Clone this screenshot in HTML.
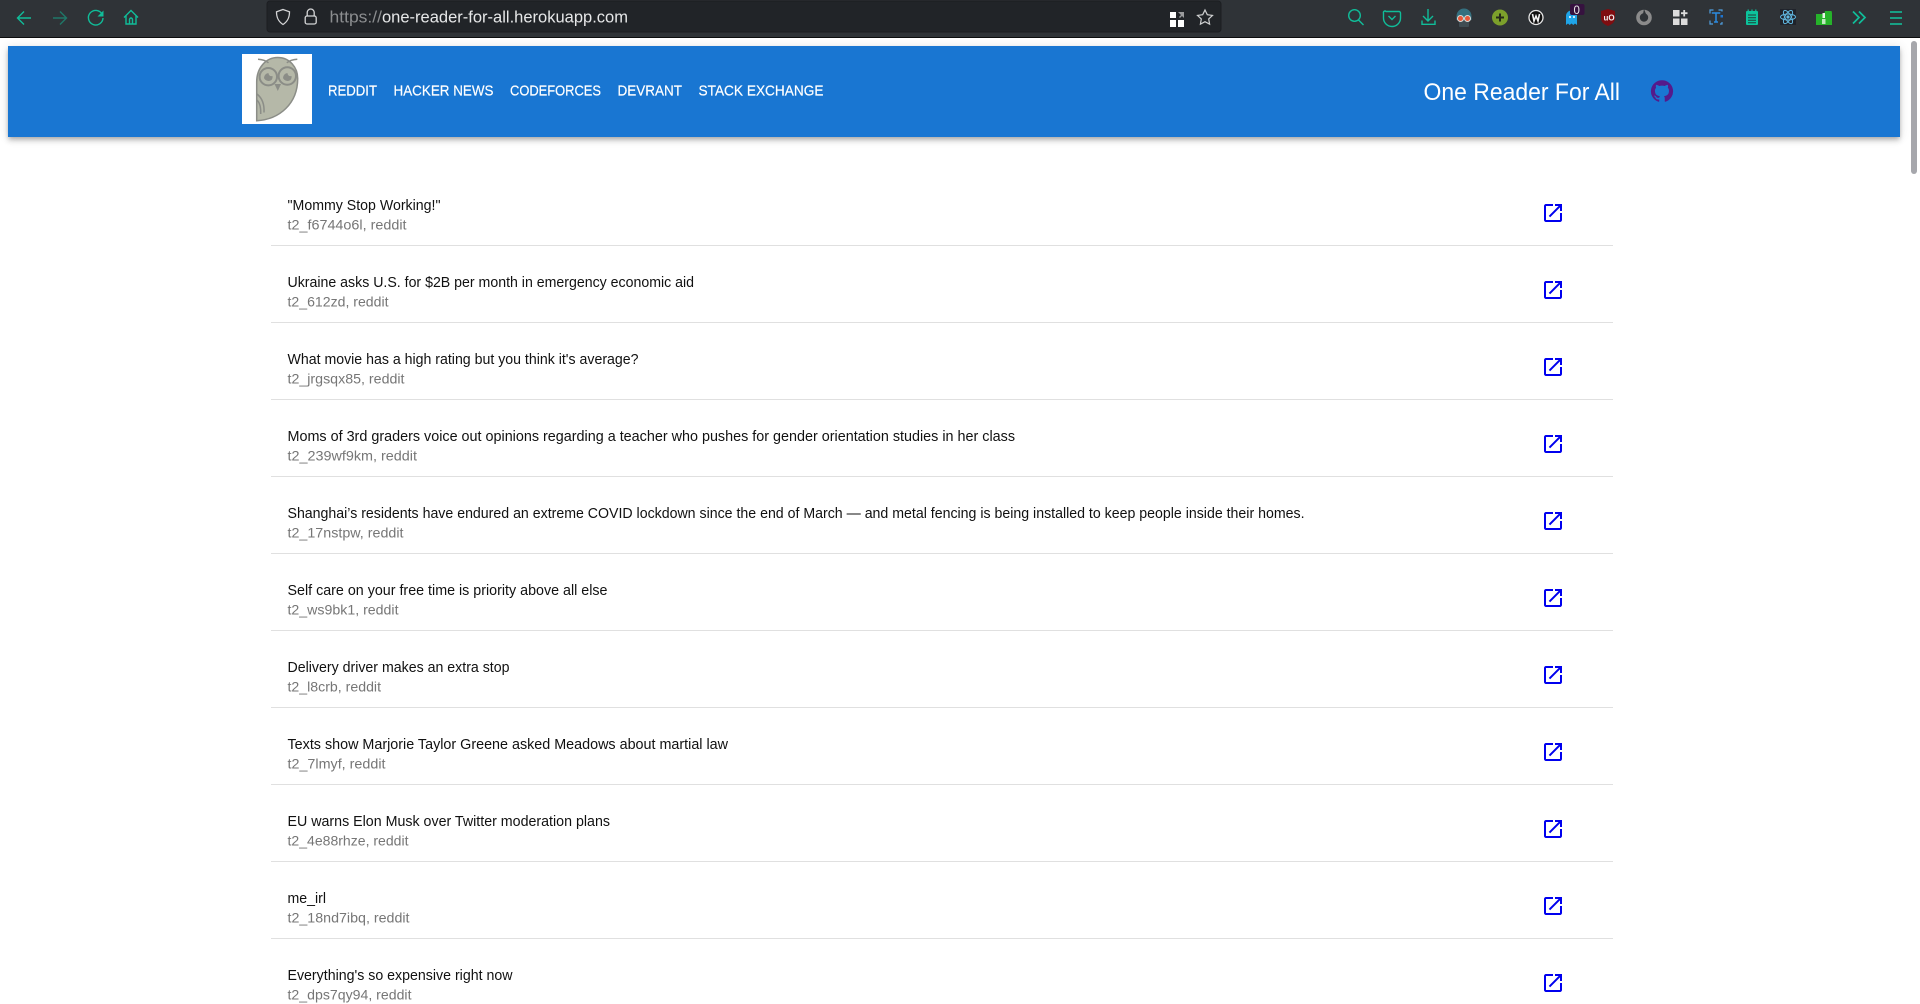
<!DOCTYPE html>
<html lang="en">
<head>
<meta charset="utf-8">
<title>One Reader For All</title>
<style>
html,body{margin:0;padding:0;width:1920px;height:1004px;overflow:hidden;background:#fff}
#bar{position:absolute;left:8px;top:46px;width:1892px;height:91px;background:#1976d2;box-shadow:0 2px 4px -1px rgba(0,0,0,.2),0 4px 5px 0 rgba(0,0,0,.14),0 1px 10px 0 rgba(0,0,0,.12)}
svg{position:absolute;left:0;top:0}
text{font-family:"Liberation Sans",sans-serif}
.t{font-size:15.2px;fill:#111}
.s{font-size:13.8px;fill:#767676}
.n{font-size:15px;fill:#fff;stroke:#fff;stroke-width:.2px}
.tl{fill:none;stroke:#10bd99;stroke-width:1.4}
</style>
</head>
<body>
<div id="bar"></div>
<svg width="1920" height="1004" viewBox="0 0 1920 1004" xmlns="http://www.w3.org/2000/svg">
<!-- toolbar -->
<rect x="0" y="0" width="1920" height="37" fill="#2f3337"/>
<rect x="0" y="37" width="1920" height="1" fill="#0c0d0e"/>
<rect x="267" y="1" width="954" height="31" rx="3" fill="#212428" stroke="#1c1e21"/>

<!-- nav icons -->
<path class="tl" d="M31 18H18M24 11.5 17.5 18l6.5 6.5"/>
<path class="tl" d="M53 18H66M60 11.5 66.5 18 60 24.5" style="opacity:.5"/>
<path class="tl" d="M102 14a7.3 7.3 0 1 0 1 4"/>
<path d="M103.5 10.500v6h-6z" fill="#10bd99"/>
<path class="tl" d="M124 17.5 131 10.5l7 7M126 15.5v8.500h10v-8.500M129.5 24v-4.500a1.500 1.500 0 0 1 3 0V24"/>
<!-- shield / lock -->
<path d="M283 9.5l6.500 2.300c0 5.500-1.500 9.500-6.500 12.700-5-3.200-6.500-7.200-6.500-12.700z" fill="none" stroke="#d4d5d6" stroke-width="1.300"/>
<path d="M307.2 16v-3.500a3.500 3.500 0 0 1 7 0V16" fill="none" stroke="#d4d5d6" stroke-width="1.300"/>
<rect x="305.2" y="16" width="11" height="8" rx="1.800" fill="none" stroke="#d4d5d6" stroke-width="1.300"/>
<!-- url -->
<text x="329.5" y="22.500" font-size="16.500" fill="#8b8d8f" textLength="52.500" lengthAdjust="spacingAndGlyphs">https://</text>
<text x="382" y="22.500" font-size="16.500" fill="#e6e7e8" textLength="246" lengthAdjust="spacingAndGlyphs">one-reader-for-all.herokuapp.com</text>
<!-- qr + star -->
<g fill="#fff"><rect x="1170" y="12" width="6" height="6"/><rect x="1170" y="20" width="6" height="7"/><rect x="1178" y="20" width="6" height="7"/></g>
<path d="M1178 12h6v6l-2-2-2 2-1-1 2-2z" fill="#9a9b9d"/>
<path d="M1205 10l2.300 4.700 5.200.7-3.800 3.600.9 5.100-4.600-2.400-4.600 2.400.9-5.100-3.800-3.600 5.200-.7z" fill="none" stroke="#cfd0d1" stroke-width="1.200"/>

<!-- right icons -->
<circle cx="1354.5" cy="15.500" r="5.800" class="tl"/><path class="tl" d="M1358.500 20l5 5"/>
<path class="tl" d="M1386 11h13a1.500 1.500 0 0 1 1.500 1.500v5a8.500 8.500 0 0 1-17 0v-5A1.500 1.500 0 0 1 1386 11zM1388.500 15.500l3.500 3.500 3.500-3.500" transform="translate(0,.5)"/>
<path class="tl" d="M1428 9v12M1423 16l5 5 5-5M1422 20.500v3.800h13v-3.800"/>
<!-- goggles -->
<path d="M1456.500 16a7.500 7.500 0 0 1 15 0v4h-15z" fill="#35707f"/>
<rect x="1459" y="20" width="10" height="7" rx="1" fill="#3f4d53"/>
<circle cx="1460.500" cy="18.500" r="3" fill="#e8593a" stroke="#d8dcd8"/><circle cx="1467.500" cy="18.500" r="3" fill="#e8593a" stroke="#d8dcd8"/>
<!-- plus -->
<circle cx="1500" cy="17.500" r="8" fill="#7ca02b"/><path d="M1496 17.500h8M1500 13.500v8" stroke="#252a1a" stroke-width="2"/>
<!-- W -->
<circle cx="1536" cy="17.500" r="7" fill="#111" stroke="#e6e6e6" stroke-width="1.300"/>
<path d="M1532.500 14l1.500 7 2-5 2 5 1.500-7" fill="none" stroke="#f2f2f2" stroke-width="1.600"/>
<!-- ghost -->
<path d="M1566 25v-9a5.500 5.500 0 0 1 11 0v9l-2-1.500-1.700 1.500-1.800-1.500-1.800 1.500-1.700-1.500z" fill="#1fa5e8"/>
<circle cx="1570" cy="17" r="1" fill="#fff"/><circle cx="1574" cy="17" r="1" fill="#fff"/>
<rect x="1570" y="4" width="14.500" height="11" rx="2" fill="#36123f"/>
<text x="1573.5" y="14" font-size="11.500" fill="#e8e8e8">0</text>
<!-- ublock -->
<path d="M1601 11l7-2 7 2v7c0 4-3 6.500-7 8-4-1.500-7-4-7-8z" fill="#7f0d10"/>
<text x="1603.5" y="20.500" font-size="8" font-weight="bold" fill="#eee">uO</text>
<!-- ring -->
<circle cx="1644" cy="17.500" r="6" fill="none" stroke="#8b8b8b" stroke-width="3.600"/>
<path d="M1644 9l2 5h-3z" fill="#2f3337"/>
<!-- grid -->
<g fill="#dcdcdc"><rect x="1673" y="10" width="6.500" height="6.500"/><rect x="1673" y="18.500" width="6.500" height="6.500"/><rect x="1681" y="18.500" width="6.500" height="6.500"/></g>
<path d="M1684.200 10v6.500M1681 13.200h6.500" stroke="#dcdcdc" stroke-width="1.800"/>
<!-- T capture -->
<path d="M1710 13.500V10h3.500M1718.500 10h3.500v1.500M1710 20.500V24h3M1722 22v2h-2" fill="none" stroke="#4f9fe0" stroke-width="1.200"/>
<path d="M1711.800 13h8.500M1716 13v9M1714 22h4" stroke="#2a8be0" stroke-width="1.500" fill="none"/>
<rect x="1720.5" y="15" width="2.500" height="2.500" fill="#1d74d0"/>
<!-- notepad -->
<rect x="1746" y="11" width="12" height="14" rx="1" fill="#0cc39c"/>
<path d="M1748.200 9.500v2.500M1752 9.500v2.500M1755.800 9.500v2.500" stroke="#0cc39c" stroke-width="1.200"/>
<path d="M1748 15h8M1748 17.700h8M1748 20.300h8M1748 22.800h8" stroke="#1f3f39" stroke-width="1"/>
<!-- react -->
<rect x="1780" y="9" width="16" height="16" fill="#20232a"/>
<g fill="none" stroke="#61b8e0" stroke-width="1"><ellipse cx="1788" cy="17" rx="7.500" ry="3"/><ellipse cx="1788" cy="17" rx="7.500" ry="3" transform="rotate(60 1788 17)"/><ellipse cx="1788" cy="17" rx="7.500" ry="3" transform="rotate(120 1788 17)"/></g>
<circle cx="1788" cy="17" r="1.600" fill="#61b8e0"/>
<!-- green folder -->
<path d="M1816 14h8l1-3h6.500l.5 2v12h-16z" fill="#26b32a"/>
<rect x="1822.5" y="13" width="2.500" height="5" fill="#e8f6e8"/>
<rect x="1822" y="19" width="3.500" height="5" fill="#bfe8bf"/>
<!-- chevrons + menu -->
<path class="tl" d="M1853 11.500l6 6-6 6M1859 11.500l6 6-6 6" style="stroke-width:1.700"/>
<path d="M1890 12h12M1890 18h12M1890 24h12" stroke="#10c49d" stroke-width="1.600"/>

<!-- logo -->
<rect x="242" y="54" width="70" height="70" fill="#fff"/>
<path d="M256.7 120.700V82c0-14 9-24.500 21-24.500s20 10 20 21c0 25-18 41-41 42.200z" fill="#b5b8a8" stroke="#8b8d87" stroke-width="1.500"/>
<path d="M258 59.300c5 .3 8 1.500 10.500 3.500M297.300 59.300c-5 .3-8 1.500-10.500 3.500" fill="none" stroke="#8b8d87" stroke-width="1.500"/>
<circle cx="268.3" cy="76.700" r="8.700" fill="#b5b8a8" stroke="#8b8d87" stroke-width="2"/>
<circle cx="287.3" cy="76" r="8.700" fill="#b5b8a8" stroke="#8b8d87" stroke-width="2"/>
<path d="M264 78a5 5 0 0 0 7.500 2 5 5 0 0 0 1-4 3 3 0 0 1-4-3 5 5 0 0 0-4.500 5z" fill="#8b8d87"/>
<path d="M283 78a5 5 0 0 0 7.500 2 5 5 0 0 0 1-4 3 3 0 0 1-4-3 5 5 0 0 0-4.500 5z" fill="#8b8d87"/>
<path d="M274.5 84h6.500l-3.200 7z" fill="#8b8d87"/>
<path d="M257 94c5 4 7.500 10 7 18.500M257 100c3 3 4 7 3.700 14" fill="none" stroke="#8b8d87" stroke-width="1.500"/>

<!-- nav -->
<text class="n" x="328" y="95.500" textLength="49" lengthAdjust="spacingAndGlyphs">REDDIT</text>
<text class="n" x="393.5" y="95.500" textLength="100" lengthAdjust="spacingAndGlyphs">HACKER NEWS</text>
<text class="n" x="510" y="95.500" textLength="91" lengthAdjust="spacingAndGlyphs">CODEFORCES</text>
<text class="n" x="617.5" y="95.500" textLength="64.500" lengthAdjust="spacingAndGlyphs">DEVRANT</text>
<text class="n" x="698.5" y="95.500" textLength="125" lengthAdjust="spacingAndGlyphs">STACK EXCHANGE</text>
<text x="1423.5" y="100" font-size="24" fill="#fff" textLength="196.500" lengthAdjust="spacingAndGlyphs">One Reader For All</text>
<g transform="translate(1650,79)" fill="#551a8b"><path d="M12 1.270a11 11 0 00-3.480 21.460c.550.090.730-.280.730-.550v-1.840c-3.030.640-3.670-1.460-3.670-1.460-.550-1.290-1.280-1.650-1.280-1.650-.920-.650.100-.650.100-.650 1.100 0 1.730 1.100 1.730 1.100.920 1.650 2.570 1.200 3.210.920a2 2 0 01.640-1.470c-2.470-.270-5.040-1.190-5.040-5.500 0-1.100.460-2.100 1.200-2.840a3.760 3.760 0 010-2.930s.920-.270 3.110 1.100c1.800-.490 3.700-.490 5.500 0 2.100-1.380 3.020-1.100 3.020-1.100a3.760 3.760 0 010 2.930c.830.740 1.200 1.740 1.200 2.940 0 4.210-2.570 5.130-5.040 5.400.450.370.820.920.820 2.020v3.030c0 .270.100.640.730.550A11 11 0 0012 1.270"/></g>

<!-- scrollbar -->
<rect x="1911" y="41" width="6" height="133" rx="3" fill="#a6a7ac"/>

<!-- rows -->
<defs>
<path id="ext" fill="#0000ee" d="M19 19H5V5h7V3H5c-1.110 0-2 .900-2 2v14c0 1.100.890 2 2 2h14c1.100 0 2-.900 2-2v-7h-2v7zM14 3v2h3.590l-9.830 9.830 1.410 1.410L19 6.410V10h2V3h-7z"/>
</defs>
<g fill="#e0e0e0">
<rect x="271" y="245" width="1342" height="1"/><rect x="271" y="322" width="1342" height="1"/><rect x="271" y="399" width="1342" height="1"/><rect x="271" y="476" width="1342" height="1"/><rect x="271" y="553" width="1342" height="1"/><rect x="271" y="630" width="1342" height="1"/><rect x="271" y="707" width="1342" height="1"/><rect x="271" y="784" width="1342" height="1"/><rect x="271" y="861" width="1342" height="1"/><rect x="271" y="938" width="1342" height="1"/>
</g>
<use href="#ext" x="1541" y="201"/><use href="#ext" x="1541" y="278"/><use href="#ext" x="1541" y="355"/><use href="#ext" x="1541" y="432"/><use href="#ext" x="1541" y="509"/><use href="#ext" x="1541" y="586"/><use href="#ext" x="1541" y="663"/><use href="#ext" x="1541" y="740"/><use href="#ext" x="1541" y="817"/><use href="#ext" x="1541" y="894"/><use href="#ext" x="1541" y="971"/>

<text class="t" x="287.5" y="210" textLength="153" lengthAdjust="spacingAndGlyphs">"Mommy Stop Working!"</text>
<text class="s" x="287.5" y="229.5" textLength="119" lengthAdjust="spacingAndGlyphs">t2_f6744o6l, reddit</text>
<text class="t" x="287.5" y="287" textLength="406.500" lengthAdjust="spacingAndGlyphs">Ukraine asks U.S. for $2B per month in emergency economic aid</text>
<text class="s" x="287.5" y="306.5" textLength="101" lengthAdjust="spacingAndGlyphs">t2_612zd, reddit</text>
<text class="t" x="287.5" y="364" textLength="351" lengthAdjust="spacingAndGlyphs">What movie has a high rating but you think it's average?</text>
<text class="s" x="287.5" y="383.5" textLength="117" lengthAdjust="spacingAndGlyphs">t2_jrgsqx85, reddit</text>
<text class="t" x="287.5" y="441" textLength="727.500" lengthAdjust="spacingAndGlyphs">Moms of 3rd graders voice out opinions regarding a teacher who pushes for gender orientation studies in her class</text>
<text class="s" x="287.5" y="460.5" textLength="129.500" lengthAdjust="spacingAndGlyphs">t2_239wf9km, reddit</text>
<text class="t" x="287.5" y="518" textLength="1017" lengthAdjust="spacingAndGlyphs">Shanghai’s residents have endured an extreme COVID lockdown since the end of March — and metal fencing is being installed to keep people inside their homes.</text>
<text class="s" x="287.5" y="537.5" textLength="116" lengthAdjust="spacingAndGlyphs">t2_17nstpw, reddit</text>
<text class="t" x="287.5" y="595" textLength="320" lengthAdjust="spacingAndGlyphs">Self care on your free time is priority above all else</text>
<text class="s" x="287.5" y="614.5" textLength="111" lengthAdjust="spacingAndGlyphs">t2_ws9bk1, reddit</text>
<text class="t" x="287.5" y="672" textLength="222" lengthAdjust="spacingAndGlyphs">Delivery driver makes an extra stop</text>
<text class="s" x="287.5" y="691.5" textLength="93.500" lengthAdjust="spacingAndGlyphs">t2_l8crb, reddit</text>
<text class="t" x="287.5" y="749" textLength="440.500" lengthAdjust="spacingAndGlyphs">Texts show Marjorie Taylor Greene asked Meadows about martial law</text>
<text class="s" x="287.5" y="768.5" textLength="98" lengthAdjust="spacingAndGlyphs">t2_7lmyf, reddit</text>
<text class="t" x="287.5" y="826" textLength="322.500" lengthAdjust="spacingAndGlyphs">EU warns Elon Musk over Twitter moderation plans</text>
<text class="s" x="287.5" y="845.5" textLength="121" lengthAdjust="spacingAndGlyphs">t2_4e88rhze, reddit</text>
<text class="t" x="287.5" y="903" textLength="38.500" lengthAdjust="spacingAndGlyphs">me_irl</text>
<text class="s" x="287.5" y="922.5" textLength="122" lengthAdjust="spacingAndGlyphs">t2_18nd7ibq, reddit</text>
<text class="t" x="287.5" y="980" textLength="225" lengthAdjust="spacingAndGlyphs">Everything's so expensive right now</text>
<text class="s" x="287.5" y="999.5" textLength="124" lengthAdjust="spacingAndGlyphs">t2_dps7qy94, reddit</text>
</svg>
</body>
</html>
